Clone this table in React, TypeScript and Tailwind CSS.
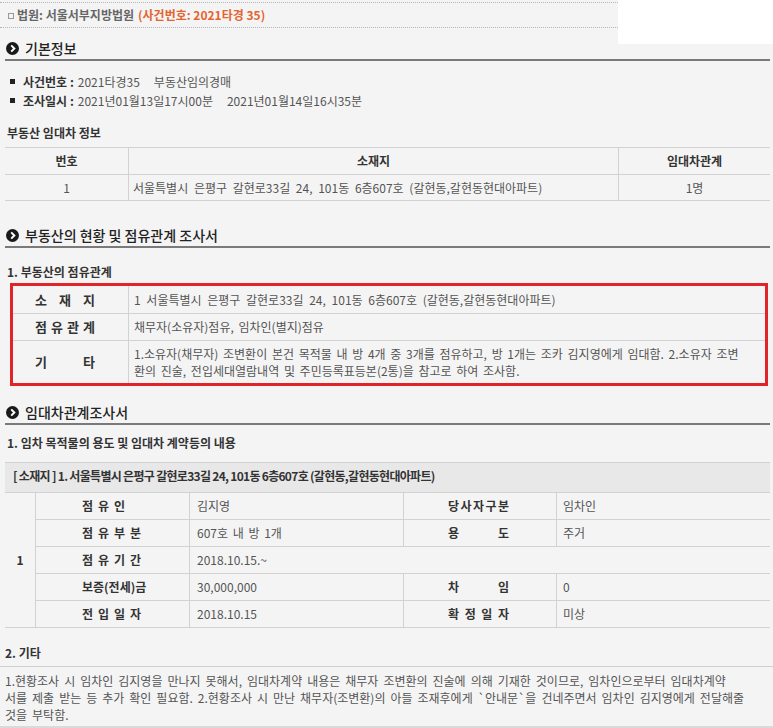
import React from "react";

const font = "font-['Noto_Sans_CJK_KR','Noto_Sans',sans-serif]";

function Arrow() {
  return (
    <svg width="13" height="13" viewBox="0 0 14 14" className="shrink-0">
      <circle cx="7" cy="7" r="7" fill="#1a1a1a" />
      <path d="M5.6 3.6 L9 7 L5.6 10.4" fill="none" stroke="#fff" strokeWidth="2.1" />
    </svg>
  );
}

function Heading({ title, className = "" }: { title: string; className?: string }) {
  return (
    <div
      className={`ml-[5px] mr-[3px] flex h-[23px] items-center gap-[6px] border-b-2 border-[#7a7a7a] pl-[1px] text-[14px] font-medium leading-[21px] text-[#222] ${className}`}
    >
      <Arrow />
      <span>{title}</span>
    </div>
  );
}

function Spread({ text, width }: { text: string; width: string }) {
  return (
    <span className={`flex justify-between ${width}`}>
      {text.split("").map((c, i) => (
        <span key={i}>{c}</span>
      ))}
    </span>
  );
}

const occupancy = [
  { label: "점유인", value: "김지영", label2: "당사자구분", value2: "임차인", track: true },
  { label: "점유부분", value: "607호 내 방 1개", label2: "용도", value2: "주거", track: true },
  { label: "점유기간", value: "2018.10.15.~", track: true },
  { label: "보증(전세)금", value: "30,000,000", label2: "차임", value2: "0", track: false },
  { label: "전입일자", value: "2018.10.15", label2: "확정일자", value2: "미상", track: true },
];

export default function App() {
  return (
    <div className={`${font} relative h-[728px] w-[773px] overflow-hidden bg-[#f4f4f4] text-[12px] text-[#555]`}>
      <div className="absolute right-0 top-0 h-[44px] w-[155px] bg-white" />

      {/* 법원 */}
      <div className="mt-[2px] flex h-[26px] w-[618px] items-center border-y border-dotted border-[#b5b5b5] pl-[8px] text-[12px] font-bold">
        <span className="mr-[3px] mt-[2px] inline-block h-[6px] w-[6px] border border-[#999]" />
        <span className="text-[#666]">법원: 서울서부지방법원</span>
        <span className="ml-[4px] text-[#e4642f]">(사건번호: 2021타경 35)</span>
      </div>

      <Heading title="기본정보" className="mt-[10px]" />
      <ul className="mt-[11px] leading-[19px]">
        <li className="flex items-center">
          <span className="ml-[10px] mr-[8px] h-[5px] w-[5px] bg-[#222]" />
          <b className="text-[#333]">사건번호 :</b>
          <span className="ml-[4px]">2021타경35</span>
          <span className="ml-[14px]">부동산임의경매</span>
        </li>
        <li className="flex items-center">
          <span className="ml-[10px] mr-[8px] h-[5px] w-[5px] bg-[#222]" />
          <b className="text-[#333]">조사일시 :</b>
          <span className="ml-[4px]">2021년01월13일17시00분</span>
          <span className="ml-[14px]">2021년01월14일16시35분</span>
        </li>
      </ul>

      <div className="mt-[13px] pl-[7px] font-bold leading-[20px] text-[#333]">부동산 임대차 정보</div>
      <div className="ml-[5px] mr-[3px] mt-[4px] border-y border-[#d2d2d2]">
        <div className="grid h-[26px] grid-cols-[123px_490px_1fr] items-stretch font-bold text-[#333]">
          <div className="flex items-center justify-center">번호</div>
          <div className="flex items-center justify-center border-l border-[#d2d2d2]">소재지</div>
          <div className="flex items-center justify-center border-l border-[#d2d2d2]">임대차관계</div>
        </div>
        <div className="grid h-[26px] grid-cols-[123px_490px_1fr] border-t border-[#d2d2d2]">
          <div className="flex items-center justify-center">1</div>
          <div className="flex items-center border-l border-[#d2d2d2] pl-[4px] [word-spacing:3px]">
            서울특별시 은평구 갈현로33길 24, 101동 6층607호 (갈현동,갈현동현대아파트)
          </div>
          <div className="flex items-center justify-center border-l border-[#d2d2d2]">1명</div>
        </div>
      </div>

      <Heading title="부동산의 현황 및 점유관계 조사서" className="mt-[24px]" />
      <div className="mt-[14px] pl-[7px] font-bold leading-[20px] text-[#333]">1. 부동산의 점유관계</div>
      <div className="ml-[10px] mt-[1px] w-[758px] border-[3px] border-[#e0242a]">
        <div className="flex h-[27px]">
          <div className="flex w-[115px] items-center pl-[22px] text-[13px] font-bold text-[#333]">
            <Spread text="소재지" width="w-[60px]" />
          </div>
          <div className="flex flex-1 items-center border-l border-[#d2d2d2] pl-[5px] [word-spacing:3px]">
            1 서울특별시 은평구 갈현로33길 24, 101동 6층607호 (갈현동,갈현동현대아파트)
          </div>
        </div>
        <div className="flex h-[27px] border-t border-[#d2d2d2]">
          <div className="flex w-[115px] items-center pl-[22px] text-[13px] font-bold text-[#333]">
            <Spread text="점유관계" width="w-[60px]" />
          </div>
          <div className="flex flex-1 items-center border-l border-[#d2d2d2] pl-[5px] [word-spacing:2px]">
            채무자(소유자)점유, 임차인(별지)점유
          </div>
        </div>
        <div className="flex h-[43px] border-t border-[#d2d2d2]">
          <div className="flex w-[115px] items-center pl-[22px] text-[13px] font-bold text-[#333]">
            <Spread text="기타" width="w-[60px]" />
          </div>
          <div className="flex flex-1 flex-col justify-center border-l border-[#d2d2d2] pl-[5px] leading-[17px] [word-spacing:2px]">
            <span className="whitespace-nowrap">
              1.소유자(채무자) 조변환이 본건 목적물 내 방 4개 중 3개를 점유하고, 방 1개는 조카 김지영에게 임대함. 2.소유자 조변
            </span>
            <span className="whitespace-nowrap">환의 진술, 전입세대열람내역 및 주민등록표등본(2통)을 참고로 하여 조사함.</span>
          </div>
        </div>
      </div>

      <Heading title="임대차관계조사서" className="mt-[16px]" />
      <div className="mt-[8px] pl-[7px] font-bold leading-[20px] text-[#333]">
        1. 임차 목적물의 용도 및 임대차 계약등의 내용
      </div>
      <div className="ml-[5px] mr-[3px] mt-[9px] flex h-[30px] items-center border-t border-[#d2d2d2] bg-[#e8e8e8] pb-[3px] pl-[8px] font-bold tracking-[-0.7px] text-[#333]">
        [ 소재지 ] 1. 서울특별시 은평구 갈현로33길 24, 101동 6층607호 (갈현동,갈현동현대아파트)
      </div>
      <div className="ml-[5px] mr-[3px] flex border-t border-[#d2d2d2]">
        <div className="flex w-[31px] items-center justify-center border-b border-r border-[#d2d2d2] font-bold text-[#333]">
          1
        </div>
        <div className="flex flex-1 flex-col">
          {occupancy.map((r) => (
            <div
              key={r.label}
              className={`grid h-[27px] border-b border-[#d2d2d2] ${
                r.label2 ? "grid-cols-[153px_214px_153px_1fr]" : "grid-cols-[153px_1fr]"
              }`}
            >
              <div
                className={`flex items-center pl-[46px] font-bold text-[#333] ${r.track ? "tracking-[5px]" : ""}`}
              >
                {r.label}
              </div>
              <div className="flex items-center border-l border-[#d2d2d2] pl-[7px] [word-spacing:2px]">{r.value}</div>
              {r.label2 && (
                <>
                  <div className="flex items-center border-l border-[#d2d2d2] pl-[44px] font-bold text-[#333]">
                    <Spread text={r.label2} width="w-[61px]" />
                  </div>
                  <div className="flex items-center border-l border-[#d2d2d2] pl-[6px]">{r.value2}</div>
                </>
              )}
            </div>
          ))}
        </div>
      </div>

      <div className="mt-[15px] border-b border-[#cfcfcf] pb-[3px] pl-[5px] font-bold leading-[20px] text-[#333]">
        2. 기타
      </div>
      <div className="border-b-2 border-[#dadada] pb-[3px] pl-[5px] pt-[5px] leading-[17px] [word-spacing:2.3px]">
        <div className="whitespace-nowrap">
          1.현황조사 시 임차인 김지영을 만나지 못해서, 임대차계약 내용은 채무자 조변환의 진술에 의해 기재한 것이므로, 임차인으로부터 임대차계약
        </div>
        <div className="whitespace-nowrap">
          서를 제출 받는 등 추가 확인 필요함. 2.현황조사 시 만난 채무자(조변환)의 아들 조재후에게 `안내문`을 건네주면서 임차인 김지영에게 전달해줄
        </div>
        <div>것을 부탁함.</div>
      </div>
    </div>
  );
}
